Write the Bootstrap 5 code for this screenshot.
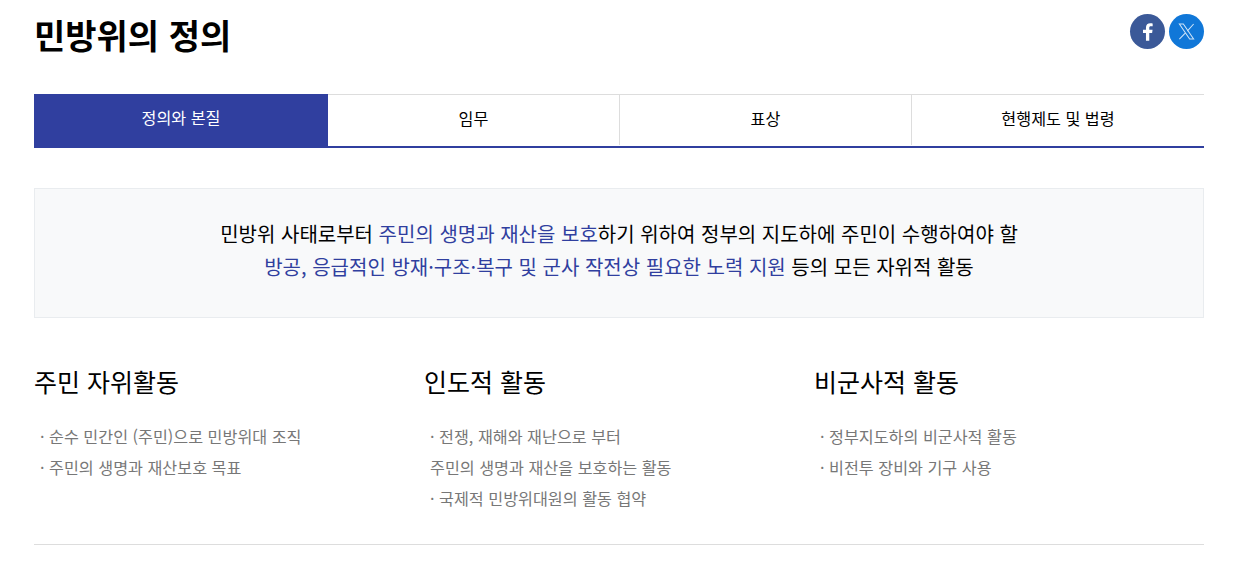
<!DOCTYPE html>
<html lang="ko">
<head>
    <meta charset="UTF-8">
    <meta name="viewport" content="width=device-width, initial-scale=1.0">
    <title>민방위의 정의</title>
    <link href="https://cdn.jsdelivr.net/npm/bootstrap@5.3.0/dist/css/bootstrap.min.css" rel="stylesheet">
    <style>
        body { font-family: "Noto Sans CJK KR", "Noto Sans", sans-serif; color: #000; overflow: hidden; }
        .page-wrap { width: 1170px; margin-left: 34px; }
        .page-head { height: 94px; padding-top: 10px; }
        .page-title { font-size: 34px; font-weight: 700; line-height: 50px; margin: 0; }
        .sns-btn { width: 35px; height: 35px; margin-top: 4px; border-radius: 50%; }
        .sns-fb { background: #3b5998; }
        .sns-x { background: #1077d8; }
        .tab-bar { border-top: 1px solid #ddd; border-bottom: 2px solid #303f9f; height: 54px; }
        .tab-item { width: 292px; height: 50px; padding-bottom: 4px; font-size: 16.200px; color: #000; text-decoration: none; border-left: 1px solid #ddd; }
        .tab-item.on { width: 294px; height: 54px; margin-top: -1px; background: #303f9f; color: #fff; border-left: 0; padding-bottom: 7px; }
        .tab-item.on + .tab-item { border-left: 0; width: 291px; }
        .tab-item:last-child { width: 293px; }
        .def-box { margin-top: 40px; height: 130px; background: #f8f9fa; border: 1px solid #e9ecef; font-size: 20px; line-height: 33px; padding-top: 28px; }
        .def-box em { font-style: normal; color: #303f9f; }
        .act-row { margin-top: 43px; }
        .act-col { width: 390px; }
        .act-title { font-size: 25px; font-weight: 400; line-height: 40px; margin: 0 0 20px; }
        .act-list { font-size: 16.200px; line-height: 31px; color: #777; padding-left: 6px; margin: 0; list-style: none; }
        .end-line { margin: 0; margin-top: 30px; border: 0; border-top: 1px solid #ddd; opacity: 1; }
    </style>
</head>
<body>
    <div class="page-wrap">
        <!-- Title -->
        <div class="page-head d-flex justify-content-between align-items-start">
            <h1 class="page-title">민방위의 정의</h1>
            <div class="d-flex gap-1">
                <a href="#" class="sns-btn sns-fb d-flex align-items-center justify-content-center" aria-label="facebook">
                    <svg width="11" height="18" viewBox="0 0 10 16"><path fill="#fff" d="M6.600 16V9h2.600l.4-3H6.600V4.200c0-.9.3-1.400 1.500-1.400h1.600V.2C9.400.1 8.500 0 7.500 0 5.200 0 3.600 1.400 3.600 3.900V6H.9v3h2.700v7z"/></svg>
                </a>
                <a href="#" class="sns-btn sns-x d-flex align-items-center justify-content-center" aria-label="x">
                    <svg width="19" height="19" viewBox="0 0 24 24"><path fill="none" stroke="#fff" stroke-opacity=".8" stroke-width="1.300" d="M3 2.500h5l13 19h-5zM21 2.500l-8 9M11 13.500l-8 8"/></svg>
                </a>
            </div>
        </div>

        <!-- Tabs -->
        <div class="tab-bar d-flex">
            <a href="#" class="tab-item on d-flex align-items-center justify-content-center">정의와 본질</a>
            <a href="#" class="tab-item d-flex align-items-center justify-content-center">임무</a>
            <a href="#" class="tab-item d-flex align-items-center justify-content-center">표상</a>
            <a href="#" class="tab-item d-flex align-items-center justify-content-center">현행제도 및 법령</a>
        </div>

        <!-- Definition -->
        <div class="def-box text-center">
            민방위 사태로부터 <em>주민의 생명과 재산을 보호</em>하기 위하여 정부의 지도하에 주민이 수행하여야 할<br>
            <em>방공, 응급적인 방재·구조·복구 및 군사 작전상 필요한 노력 지원</em> 등의 모든 자위적 활동
        </div>

        <!-- Activities -->
        <div class="act-row d-flex">
            <div class="act-col">
                <h2 class="act-title">주민 자위활동</h2>
                <ul class="act-list">
                    <li>· 순수 민간인 (주민)으로 민방위대 조직</li>
                    <li>· 주민의 생명과 재산보호 목표</li>
                </ul>
            </div>
            <div class="act-col">
                <h2 class="act-title">인도적 활동</h2>
                <ul class="act-list">
                    <li>· 전쟁, 재해와 재난으로 부터</li>
                    <li>주민의 생명과 재산을 보호하는 활동</li>
                    <li>· 국제적 민방위대원의 활동 협약</li>
                </ul>
            </div>
            <div class="act-col">
                <h2 class="act-title">비군사적 활동</h2>
                <ul class="act-list">
                    <li>· 정부지도하의 비군사적 활동</li>
                    <li>· 비전투 장비와 기구 사용</li>
                </ul>
            </div>
        </div>
        <hr class="end-line">
    </div>
    <script src="https://cdn.jsdelivr.net/npm/bootstrap@5.3.0/dist/js/bootstrap.bundle.min.js"></script>
</body>
</html>
